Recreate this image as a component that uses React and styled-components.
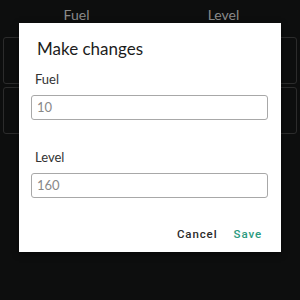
import React from "react";
import styled, { createGlobalStyle } from "styled-components";

const GlobalStyle = createGlobalStyle`
  html, body {
    margin: 0;
    padding: 0;
    background: #0d0e0e;
    font-family: "Lato", "Open Sans", sans-serif;
  }
`;

const Screen = styled.div`
  position: relative;
  width: 300px;
  height: 300px;
  overflow: hidden;
  background: #0d0e0e;
`;

const Header = styled.div`
  display: grid;
  grid-template-columns: 1fr 1fr;
  padding: 6px 3px 0;
  height: 31px;
  box-sizing: border-box;
`;

const HeaderLabel = styled.div`
  text-align: center;
  color: #8a8a8a;
  font-size: 14px;
  line-height: 18px;
`;

const Grid = styled.div`
  display: grid;
  grid-template-columns: 1fr 1fr;
  gap: 3px 6px;
  padding: 6px 3px 0;
`;

const Cell = styled.div`
  height: 45px;
  border: 1px solid #2c2c2c;
  border-radius: 3px;
`;

const Dialog = styled.div`
  position: absolute;
  left: 19px;
  top: 23px;
  width: 262px;
  height: 229px;
  background: #fff;
  box-sizing: border-box;
  padding: 14px 13px 0 12px;
  display: flex;
  flex-direction: column;
  box-shadow: 0 2px 6px rgba(0, 0, 0, 0.5);
`;

const Title = styled.div`
  font-size: 17px;
  color: #1c1c1c;
  padding-left: 6px;
  line-height: 24px;
`;

const Field = styled.div`
  display: flex;
  flex-direction: column;
  margin-top: ${(p) => p.$top}px;
`;

const Label = styled.div`
  font-size: 13px;
  color: #333;
  padding-left: 4px;
  line-height: 18px;
`;

const Input = styled.div`
  margin-top: 7px;
  height: 25px;
  border: 1px solid #a8a8a8;
  border-radius: 3px;
  box-sizing: border-box;
  padding-left: 5px;
  font-size: 13px;
  line-height: 23px;
  color: #888;
`;

const Actions = styled.div`
  display: flex;
  justify-content: flex-end;
  gap: 16px;
  margin-top: 29px;
  padding-right: 6px;
`;

const Action = styled.div`
  font-family: "Roboto", sans-serif;
  font-weight: 500;
  font-size: 11.5px;
  letter-spacing: 0.9px;
  color: ${(p) => (p.$primary ? "#2a9a7e" : "#2a2a2a")};
`;

export default function App() {
  return (
    <Screen>
      <GlobalStyle />
      <Header>
        <HeaderLabel>Fuel</HeaderLabel>
        <HeaderLabel>Level</HeaderLabel>
      </Header>
      <Grid>
        <Cell />
        <Cell />
        <Cell />
        <Cell />
      </Grid>
      <Dialog>
        <Title>Make changes</Title>
        <Field $top={9}>
          <Label>Fuel</Label>
          <Input>10</Input>
        </Field>
        <Field $top={28}>
          <Label>Level</Label>
          <Input>160</Input>
        </Field>
        <Actions>
          <Action>Cancel</Action>
          <Action $primary>Save</Action>
        </Actions>
      </Dialog>
    </Screen>
  );
}
